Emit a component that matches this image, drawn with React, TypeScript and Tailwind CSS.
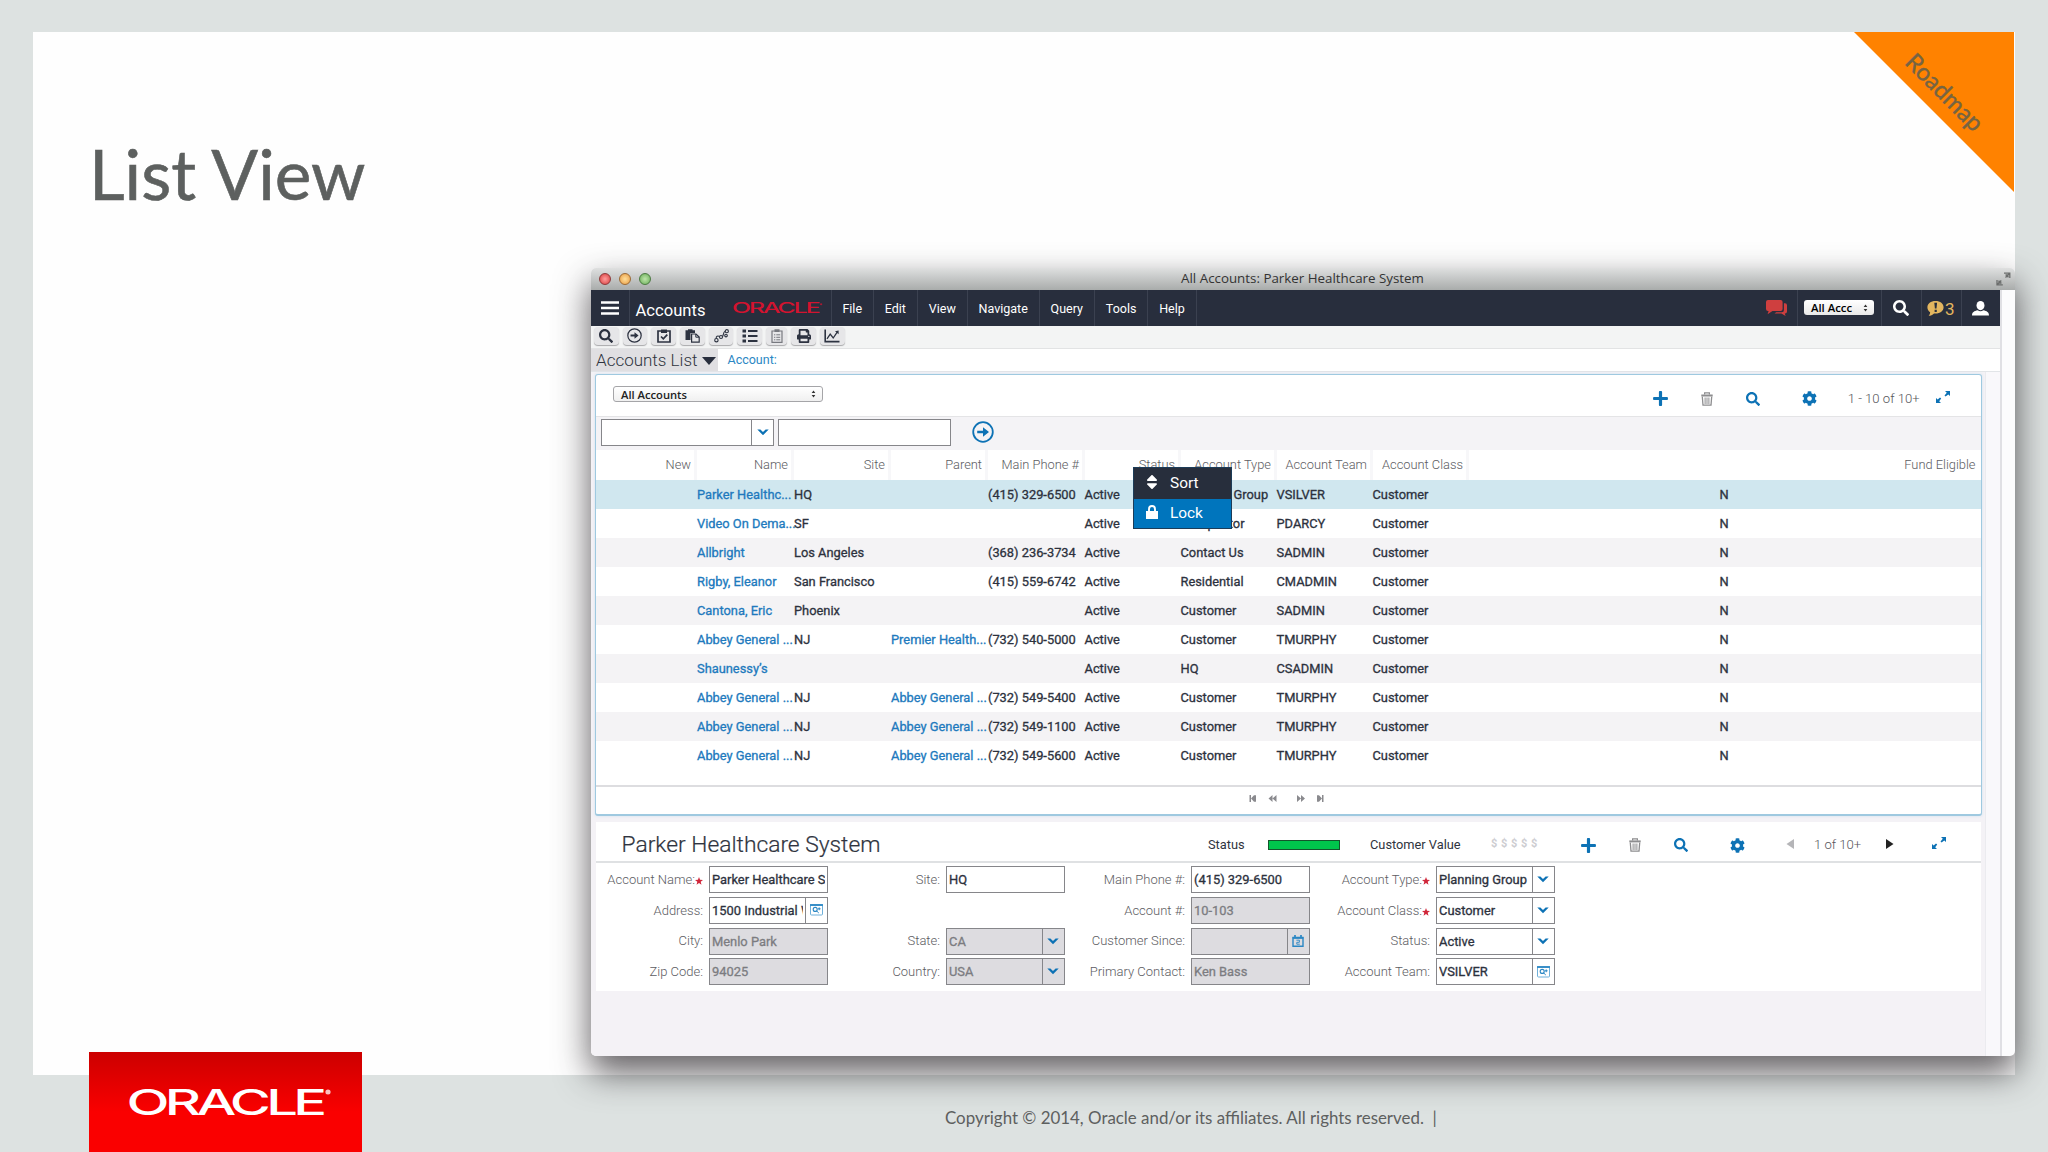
import type { ReactNode } from 'react';
import { FaCog, FaPlus, FaPrint, FaSearch, FaSort } from 'react-icons/fa';

type AccountRow = {
	name: string;
	site?: string;
	parent?: string;
	phone?: string;
	type: string;
	team: string;
};

type Field = {
	label: string;
	value: string;
	required?: boolean;
	disabled?: boolean;
	button?: 'chevron' | 'pick' | 'calendar';
};

const MENU_ITEMS = ['File', 'Edit', 'View', 'Navigate', 'Query', 'Tools', 'Help'];

const GRID_COLS = 'grid grid-cols-[99px_97px_97px_97px_97px_96px_96px_96px_96px_514px]';

const HEADERS = ['New', 'Name', 'Site', 'Parent', 'Main Phone #', 'Status', 'Account Type', 'Account Team', 'Account Class'];

const ROWS: AccountRow[] = [
	{ name: 'Parker Healthc...', site: 'HQ', phone: '(415) 329-6500', type: 'Planning Group', team: 'VSILVER' },
	{ name: 'Video On Dema...', site: 'SF', type: 'Competitor', team: 'PDARCY' },
	{ name: 'Allbright', site: 'Los Angeles', phone: '(368) 236-3734', type: 'Contact Us', team: 'SADMIN' },
	{ name: 'Rigby, Eleanor', site: 'San Francisco', phone: '(415) 559-6742', type: 'Residential', team: 'CMADMIN' },
	{ name: 'Cantona, Eric', site: 'Phoenix', type: 'Customer', team: 'SADMIN' },
	{ name: 'Abbey General ...', site: 'NJ', parent: 'Premier Health...', phone: '(732) 540-5000', type: 'Customer', team: 'TMURPHY' },
	{ name: 'Shaunessy’s', type: 'HQ', team: 'CSADMIN' },
	{ name: 'Abbey General ...', site: 'NJ', parent: 'Abbey General ...', phone: '(732) 549-5400', type: 'Customer', team: 'TMURPHY' },
	{ name: 'Abbey General ...', site: 'NJ', parent: 'Abbey General ...', phone: '(732) 549-1100', type: 'Customer', team: 'TMURPHY' },
	{ name: 'Abbey General ...', site: 'NJ', parent: 'Abbey General ...', phone: '(732) 549-5600', type: 'Customer', team: 'TMURPHY' },
];

// One array per form row, null leaves the slot empty.
const FIELDS: Array<Array<Field | null>> = [
	[
		{ label: 'Account Name:', value: 'Parker Healthcare System', required: true },
		{ label: 'Site:', value: 'HQ' },
		{ label: 'Main Phone #:', value: '(415) 329-6500' },
		{ label: 'Account Type:', value: 'Planning Group', required: true, button: 'chevron' },
	],
	[
		{ label: 'Address:', value: '1500 Industrial Way', button: 'pick' },
		null,
		{ label: 'Account #:', value: '10-103', disabled: true },
		{ label: 'Account Class:', value: 'Customer', required: true, button: 'chevron' },
	],
	[
		{ label: 'City:', value: 'Menlo Park', disabled: true },
		{ label: 'State:', value: 'CA', disabled: true, button: 'chevron' },
		{ label: 'Customer Since:', value: '', disabled: true, button: 'calendar' },
		{ label: 'Status:', value: 'Active', button: 'chevron' },
	],
	[
		{ label: 'Zip Code:', value: '94025', disabled: true },
		{ label: 'Country:', value: 'USA', disabled: true, button: 'chevron' },
		{ label: 'Primary Contact:', value: 'Ken Bass', disabled: true },
		{ label: 'Account Team:', value: 'VSILVER', button: 'pick' },
	],
];

function OracleLogo({ className }: { className: string }) {
	return (
		<svg viewBox="0 0 200 27" preserveAspectRatio="none" className={className} overflow="visible">
			<text
				x="-2.5"
				y="26.5"
				textLength="195"
				lengthAdjust="spacingAndGlyphs"
				fontFamily="Inter, sans-serif"
				fontSize="36.5"
				fontWeight="500"
				letterSpacing="-3"
				fill="currentColor"
			>
				ORACLE
			</text>
			<circle cx="198" cy="3" r="2.6" fill="currentColor" opacity="0.75" />
		</svg>
	);
}

function Chevron() {
	return (
		<svg viewBox="0 0 12 7" className="h-[7px] w-3">
			<path d="M0.3 0.4H3.4L6 2.9L8.6 0.4H11.7L6 6.2Z" fill="#0d72b5" />
		</svg>
	);
}

function PickIcon() {
	return (
		<svg viewBox="0 0 13 12" className="h-3 w-[13px]" fill="none">
			<rect x="0.5" y="1" width="12" height="10" rx="1" stroke="#6fb0da" />
			<path d="M0 1H13" stroke="#2b87c4" strokeWidth="1.8" />
			<circle cx="5.2" cy="5.4" r="2" stroke="#2b87c4" strokeWidth="1.1" />
			<path d="M6.7 7L8.8 9M9.2 3.4V6.2M7.9 4.8H10.6" stroke="#2b87c4" strokeWidth="1" />
		</svg>
	);
}

function CalendarIcon() {
	return (
		<svg viewBox="0 0 12 12" className="size-3" fill="none">
			<path d="M1 3H11V11.2H1Z" stroke="#2b87c4" strokeWidth="1.4" />
			<path d="M0.4 2.6H11.6M3 0V3M9 0V3" stroke="#2b87c4" strokeWidth="1.7" />
			<path d="M4.4 5.2H7.4V7.3H4.8V9.2H7.8" stroke="#2b87c4" strokeWidth="0.9" />
		</svg>
	);
}

function TrashIcon() {
	return (
		<svg viewBox="0 0 12 14" className="h-[14px] w-3" fill="none" stroke="#8d8d8f">
			<path d="M3.6 2.4V0.9H8.4V2.4" strokeWidth="1.2" />
			<path d="M0.3 3.4H11.7" strokeWidth="2" />
			<path d="M1.3 4.6L2 13.2H10L10.7 4.6" strokeWidth="1.3" />
			<path d="M4.1 5.5V12M6 5.5V12M7.9 5.5V12" strokeWidth="1" />
		</svg>
	);
}

function ExpandIcon() {
	return (
		<svg viewBox="0 0 14 12" className="h-3 w-[14px]">
			<path d="M9 0H14V5L12.3 3.4L9.6 5.6L8.5 4.5L10.8 1.7Z" fill="#0d72b5" />
			<path d="M5 12H0V7L1.7 8.6L4 6.5L5.2 7.6L3.2 10.3Z" fill="#0d72b5" />
		</svg>
	);
}

function ArrowCircle({ className }: { className: string }) {
	return (
		<svg viewBox="0 0 22 22" className={className} fill="none" stroke="currentColor">
			<circle cx="11" cy="11" r="9.8" strokeWidth="1.8" />
			<path d="M5.2 9.7H11V6.2L17 11L11 15.8V12.3H5.2Z" fill="currentColor" stroke="none" />
		</svg>
	);
}

function UpDown({ className }: { className: string }) {
	return (
		<svg viewBox="0 0 6 10" className={className}>
			<path d="M3 0.5L5.3 3.7H0.7ZM3 9.5L5.3 6.3H0.7Z" fill="#333" />
		</svg>
	);
}

function ToolButton({ children, narrow }: { children: ReactNode; narrow?: boolean }) {
	return (
		<div
			className={
				'flex h-[18.5px] items-center justify-center rounded-[4px] bg-[#e6e6e8] text-[#2c3240] shadow-[0_1px_1px_#a9a9ab] ' +
				(narrow ? 'w-[21px]' : 'w-[24.5px]')
			}
		>
			{children}
		</div>
	);
}

function AppletIcons() {
	return (
		<>
			<div className="flex w-[46.5px] justify-center">
				<FaPlus className="size-[17px] text-[#0d72b5]" />
			</div>
			<div className="flex w-[46.5px] justify-center">
				<TrashIcon />
			</div>
			<div className="flex w-[46.5px] justify-center">
				<FaSearch className="size-[14px] text-[#0d72b5]" />
			</div>
			<div className="flex w-[65px] justify-center">
				<FaCog className="size-[15px] text-[#0d72b5]" />
			</div>
		</>
	);
}

function FormField({ field }: { field: Field | null }) {
	if (!field) {
		return (
			<>
				<div />
				<div />
			</>
		);
	}
	return (
		<>
			<div className="flex items-center justify-end pr-[6px] text-[13px] font-light text-[#5c5c62]">
				{field.label}
				{field.required ? (
					<svg viewBox="0 0 10 10" className="mt-[3px] size-2">
						<path d="M5 0L6.3 3.5L10 3.7L7.1 6L8.1 9.7L5 7.6L1.9 9.7L2.9 6L0 3.7L3.7 3.5Z" fill="#d0263a" />
					</svg>
				) : null}
			</div>
			<div className={'flex h-[27px] border border-[#86868a] ' + (field.disabled ? 'bg-[#dddce0] text-[#7c7c81]' : 'bg-white text-[#2c313d]')}>
				<div className="min-w-0 flex-1 overflow-hidden px-[2px] text-[12.9px] leading-[25.5px] whitespace-nowrap [-webkit-text-stroke:0.3px]">
					<div className="overflow-hidden">{field.value}</div>
				</div>
				{field.button ? (
					<div className="flex w-[22px] shrink-0 items-center justify-center border-l border-[#86868a]">
						{field.button === 'chevron' ? <Chevron /> : null}
						{field.button === 'pick' ? <PickIcon /> : null}
						{field.button === 'calendar' ? <CalendarIcon /> : null}
					</div>
				) : null}
			</div>
		</>
	);
}

function TitleBar() {
	return (
		<div className="flex h-[22px] items-center rounded-t-[5px] bg-linear-to-b from-[#dfe0e0] to-[#a9acab] pl-2">
			<div className="flex w-[52px] gap-2">
				<div className="size-3 rounded-full border border-[#8f3a3a] bg-radial from-[#ff9d9d] to-[#d5343c]" />
				<div className="size-3 rounded-full border border-[#9c6a35] bg-radial from-[#ffdf9a] to-[#e69a3c]" />
				<div className="size-3 rounded-full border border-[#4c7a42] bg-radial from-[#bfe6ab] to-[#67ad56]" />
			</div>
			<div className="flex-1 pr-[42px] text-center font-['Open_Sans',sans-serif] text-[13.35px] leading-none text-[#333]">
				All Accounts: Parker Healthcare System
			</div>
			<svg viewBox="0 0 15 14" className="mr-1 h-[14px] w-[15px]" fill="none" stroke="#6b6d6c">
				<path d="M8 1.2H13.8V6M13.5 1.5L9.5 5.5M9.5 3H12V5.5" strokeWidth="1.3" />
				<path d="M1 8V12.8H6.8M1.3 12.5L5.3 8.5M3 8.5V11H5.5" strokeWidth="1.3" />
			</svg>
		</div>
	);
}

function NavBar() {
	return (
		<div className="flex h-9 shrink-0 items-stretch bg-[#282e3d] text-[12.5px] text-white">
			<div className="flex w-[39px] items-center border-r border-[#3b4150] pl-[10px]">
				<svg viewBox="0 0 18 14" className="h-[14px] w-[18px]">
					<path d="M0 1.5H18M0 7H18M0 12.5H18" stroke="#fff" strokeWidth="2.6" />
				</svg>
			</div>
			<div className="w-[103px] pl-[5.5px] text-[16.6px] leading-[41px]">Accounts</div>
			<div className="flex w-[97.5px] items-center">
				<OracleLogo className="h-[10.5px] w-[89px] text-[#d3132f]" />
			</div>
			{MENU_ITEMS.map((item) => (
				<div key={item} className="flex items-center border-l border-[#3b4150] px-[10.9px] pt-[2px]">
					{item}
				</div>
			))}
			<div className="flex-1 border-l border-[#3b4150]" />
			<div className="flex w-[31px] items-center">
				<svg viewBox="0 0 21 16" className="h-4 w-[21px]">
					<path d="M2 0H14.6Q16.6 0 16.6 2V9Q16.6 11 14.6 11H6.5L1.6 14.2L2.6 11H2Q0 11 0 9V2Q0 0 2 0Z" fill="#cf3f3f" />
					<path d="M17.9 3.2H19Q21 3.2 21 5.2V11.4Q21 13.4 19 13.4H18.8L19.6 16L15.4 13.4H8.5L10.2 12.2H15.9Q17.9 12.2 17.9 10.2Z" fill="#cf3f3f" />
				</svg>
			</div>
			<div className="flex w-[84px] items-start border-l border-[#3b4150] pt-[10px] pl-[6.5px]">
				<div className="flex h-[15px] w-[70px] items-center justify-between rounded-[3px] bg-linear-to-b from-white to-[#e9e9e9] pr-[6px] pl-[7px] font-['Open_Sans',sans-serif] text-[11.3px] leading-none font-semibold text-black">
					All Accc
					<UpDown className="h-2 w-[5px]" />
				</div>
			</div>
			<div className="flex w-[40px] items-center justify-center border-l border-[#3b4150]">
				<FaSearch className="size-4" />
			</div>
			<div className="flex w-10 items-center border-l border-[#3b4150] pl-[5.5px] text-[#e3b65f]">
				<svg viewBox="0 0 17 15" className="h-[15px] w-[17px]">
					<path d="M8.5 0C13.2 0 16.6 2.7 16.6 6.3S13.2 12.6 8.5 12.6C8 12.6 7.4 12.5 7 12.4C5.5 13.8 3.7 14.7 1.6 14.8C2.7 13.7 3.2 12.4 3.1 11.2C1.3 10.1 0.4 8.4 0.4 6.3C0.4 2.7 3.8 0 8.5 0Z" fill="currentColor" />
					<path d="M7.3 1.8H10.1L9.5 7.6H7.9ZM7.6 8.8H9.8V10.9H7.6Z" fill="#282e3d" />
				</svg>
				<span className="pt-[4px] pl-px text-[17px]">3</span>
			</div>
			<div className="flex w-[39.5px] items-center justify-center border-l border-[#3b4150]">
				<svg viewBox="0 0 17 15" className="h-[15px] w-[17px]" fill="#fff">
					<ellipse cx="8.5" cy="4.6" rx="4" ry="4.6" />
					<path d="M0 14.5C0 11 2.2 10.2 5.6 9.3Q8.5 11 11.4 9.3C14.8 10.2 17 11 17 14.5Z" />
				</svg>
			</div>
		</div>
	);
}

function ToolBar() {
	return (
		<div className="flex h-[23px] shrink-0 items-start gap-[4.2px] border-b border-[#e2e3e4] bg-[#f3f4f4] pt-[0.5px] pl-[3px]">
			<ToolButton>
				<FaSearch className="size-[14px]" />
			</ToolButton>
			<ToolButton>
				<ArrowCircle className="size-[15px]" />
			</ToolButton>
			<ToolButton>
				<svg viewBox="0 0 14 14" className="size-[14px]" fill="none" stroke="currentColor">
					<path d="M1 2H13V13H1Z" strokeWidth="1.7" />
					<path d="M4 2.2H10" strokeWidth="3.4" />
					<path d="M4 7.5L6.3 9.8L10.3 5.6" strokeWidth="1.7" />
				</svg>
			</ToolButton>
			<ToolButton>
				<svg viewBox="0 0 15 14" className="h-[14px] w-[15px]">
					<path d="M0.5 1.2H3V0.2H7.5V1.2H10V4H5.5V11H0.5Z" fill="currentColor" />
					<path d="M6.6 5H11L14.2 8V13.2H6.6Z" fill="#e6e6e8" stroke="currentColor" strokeWidth="1.2" />
					<path d="M10.8 5V8.2H14" stroke="currentColor" strokeWidth="1" fill="none" />
				</svg>
			</ToolButton>
			<ToolButton>
				<svg viewBox="0 0 15 14" className="h-[14px] w-[15px]" fill="none" stroke="currentColor" strokeWidth="1.1">
					<circle cx="2.4" cy="11.2" r="1.7" />
					<circle cx="7" cy="8" r="1.5" />
					<circle cx="12.8" cy="2.2" r="1.6" />
					<circle cx="12" cy="6.6" r="1.3" />
					<path d="M2.2 9.4C2 7.2 3.6 6.4 5.6 7.4M8.4 7.6C9.8 6.4 8.8 3 11.2 2.2" />
				</svg>
			</ToolButton>
			<ToolButton>
				<svg viewBox="0 0 16 14" className="h-[14px] w-4" stroke="currentColor" strokeWidth="2.2">
					<path d="M0.5 2H4M0.5 7H4M0.5 12H4" strokeWidth="3.2" />
					<path d="M6 2H15.5M6 7H15.5M6 12H15.5" />
				</svg>
			</ToolButton>
			<ToolButton narrow>
				<svg viewBox="0 0 12 14" className="h-[14px] w-3" fill="none" stroke="#77797f">
					<path d="M1 2H11V13.3H1Z" strokeWidth="1.2" />
					<path d="M3.5 1.6H8.5" strokeWidth="2.6" />
					<path d="M3 5.8H4.3M5.3 5.8H9.2M3 8.3H4.3M5.3 8.3H9.2M3 10.8H4.3M5.3 10.8H9.2" strokeWidth="1" />
				</svg>
			</ToolButton>
			<ToolButton>
				<FaPrint className="size-[14px]" />
			</ToolButton>
			<ToolButton>
				<svg viewBox="0 0 16 14" className="h-[14px] w-4" fill="none" stroke="currentColor">
					<path d="M1.2 0.5V12.6H15.5" strokeWidth="1.6" />
					<path d="M3 9.8L6.2 5.2L9.2 9L13.2 3.2" strokeWidth="1.3" />
					<path d="M11 2.2L14.6 1.6V5.2Z" fill="currentColor" stroke="none" />
				</svg>
			</ToolButton>
		</div>
	);
}

function ContextMenu() {
	return (
		<div className="absolute top-[91.5px] left-[537px] w-[99px] border border-[#1c3c58] text-[15.4px] text-white">
			<div className="flex h-[31px] items-center bg-[#272e3c] pl-3">
				<FaSort className="mr-3 mb-[2px] h-[18px] w-3" />
				<span className="pt-px">Sort</span>
			</div>
			<div className="flex h-[29px] items-center bg-[#0075bd] pl-3">
				<svg viewBox="0 0 12 14" className="mr-3 mb-[2px] h-[14px] w-3">
					<path d="M0 6H12V14H0Z" fill="#fff" />
					<path d="M3 6.5V4.2Q3 1 6 1T9 4.2V6.5" fill="none" stroke="#fff" strokeWidth="1.9" />
				</svg>
				<span className="pt-px">Lock</span>
			</div>
		</div>
	);
}

function ListApplet() {
	return (
		<div className="relative mt-[2px] ml-1 flex h-[442px] w-[1387px] flex-col rounded-[3px] border border-b-2 border-[#9fc9e0] bg-white shadow-[0_0_3px_#cfe3ef]">
			<div className="flex h-[42px] items-center border-b border-[#e4e4e6] pt-[6px] pl-[17px]">
				<div className="mb-[8.5px] flex h-4 w-[210px] items-center justify-between rounded-[3px] border border-[#a5a5a8] bg-linear-to-b from-white to-[#f0f0f0] pr-[6px] pl-[7px] font-['Open_Sans',sans-serif] text-[11.2px] leading-none font-semibold text-[#222]">
					All Accounts
					<UpDown className="h-2 w-[5px]" />
				</div>
				<div className="flex-1" />
				<AppletIcons />
				<div className="ml-[6px] w-[88px] text-[13.1px] font-light text-[#56565b]">1 - 10 of 10+</div>
				<div className="mr-[31.3px] mb-1">
					<ExpandIcon />
				</div>
			</div>
			<div className="flex h-[33px] items-center bg-[#f4f3f6] pb-[3px] pl-[5px]">
				<div className="flex h-[27px] w-[173px] border border-[#86868a] bg-white">
					<div className="flex-1" />
					<div className="flex w-[22px] items-center justify-center border-l border-[#86868a]">
						<Chevron />
					</div>
				</div>
				<div className="ml-1 h-[27px] w-[173px] border border-[#86868a] bg-white" />
				<ArrowCircle className="ml-[21px] size-[22px] text-[#0d72b5]" />
			</div>
			<div className={GRID_COLS + ' h-[30px] text-[12.85px] font-light text-[#5c5c62]'}>
				{HEADERS.map((h, i) => (
					<div
						key={h}
						className={'flex items-center justify-end pr-[4px] whitespace-nowrap ' + (i > 0 ? '-ml-[1.5px] border-l-[3px] border-[#f7f7f9]' : '')}
					>
						{h}
					</div>
				))}
				<div className="-ml-[1.5px] flex items-center justify-end border-l-[3px] border-[#f7f7f9] pr-[5.5px]">Fund Eligible</div>
			</div>
			{ROWS.map((row, i) => (
				<div
					key={i}
					className={
						GRID_COLS +
						' h-[29px] text-[12.85px] leading-[30.5px] whitespace-nowrap text-[#2c313d] [-webkit-text-stroke:0.3px] ' +
						(i === 0 ? 'bg-[#d0e7ef]' : i % 2 === 0 ? 'bg-[#f4f3f5]' : 'bg-white')
					}
				>
					<div />
					<div className="pl-[2px] text-[#2079bd]">{row.name}</div>
					<div className="pl-[2px]">{row.site}</div>
					<div className="pl-[2px] text-[#2079bd]">{row.parent}</div>
					<div className="pl-[2px]">{row.phone}</div>
					<div className="pl-[1.5px]">Active</div>
					<div className="pl-[1.5px]">{row.type}</div>
					<div className="pl-[1.5px]">{row.team}</div>
					<div className="pl-[1.5px]">Customer</div>
					<div className="text-center">N</div>
				</div>
			))}
			<div className="mt-[15px] flex flex-1 justify-center border-t-2 border-[#dddde0] pt-[8px] pr-[4px] text-[#8a8a8e]">
				<svg viewBox="0 0 76 7" className="h-[7px] w-[76px]" fill="currentColor">
					<path d="M0.5 0H2V7H0.5ZM2 3.5L5 0.3V6.7ZM5 0.3H7V6.7H5Z" />
					<path d="M19.5 3.5L23.5 0V7ZM23.5 3.5L27.5 0V7Z" />
					<path d="M48 0L52 3.5L48 7ZM52 0L56 3.5L52 7Z" />
					<path d="M68 0.3H70V6.7H68ZM70 0.3L73 3.5L70 6.7ZM73 0H74.5V7H73Z" />
				</svg>
			</div>
			<ContextMenu />
		</div>
	);
}

function FormApplet() {
	return (
		<div className="mt-[6px] ml-[5px] h-[169px] w-[1385px] bg-white text-[#2f3440]">
			<div className="flex h-[41px] items-center border-b-2 border-[#dfe1e3] pt-[7px]">
				<div className="w-[612px] pt-px pl-[25.5px] text-[22.8px] leading-none font-light [-webkit-text-stroke:0.2px]">
					Parker Healthcare System
				</div>
				<div className="w-[60px] text-[12.8px]">Status</div>
				<div className="mb-px h-[10px] w-[72px] border border-[#14552c] bg-[#00c64c]" />
				<div className="ml-[30px] w-[121px] text-[12.8px]">Customer Value</div>
				<div className="mb-px flex-1 text-[11px] font-bold tracking-[3.7px] text-[#cdcdd1]">$$$$$</div>
				<AppletIcons />
				<svg viewBox="0 0 8 10" className="mb-[3px] ml-4 h-[10px] w-2">
					<path d="M8 0V10L0.5 5Z" fill="#b5b5b8" />
				</svg>
				<div className="mb-px ml-[20.5px] w-[71.5px] text-[13.1px] font-light text-[#56565b]">1 of 10+</div>
				<svg viewBox="0 0 8 10" className="mb-[3px] h-[10px] w-2">
					<path d="M0 0V10L7.5 5Z" fill="#222" />
				</svg>
				<div className="mr-[35.5px] mb-1 ml-[38px]">
					<ExpandIcon />
				</div>
			</div>
			<div className="grid grid-cols-[113px_118.5px_118.5px_118.5px_126.5px_118.5px_126.5px_118.5px] gap-y-[3.8px] pt-[3px]">
				{FIELDS.flat().map((field, i) => (
					<FormField key={i} field={field} />
				))}
			</div>
		</div>
	);
}

function AppWindow() {
	return (
		<div className="ml-[558px] h-[788px] w-[1424px] rounded-[5px] bg-[#fcfcfd] font-['Roboto',sans-serif] shadow-[0_16px_34px_1px_rgba(40,36,40,0.72)]">
			<TitleBar />
			<div className="flex h-[766px] w-[1411px] flex-col overflow-hidden rounded-bl-[5px] border-r-2 border-[#e0e0e4] bg-[#f4f2f6]">
				<NavBar />
				<ToolBar />
				<div className="flex h-[23px] shrink-0 items-stretch border-b border-[#e2e5e8] bg-white">
					<div className="flex w-[127px] items-center bg-[#e0dfe2] pt-px pl-[5px] text-[17px] font-light text-[#2f3440]">
						Accounts List
						<svg viewBox="0 0 14 8" className="ml-[5px] h-2 w-[14px]">
							<path d="M0 0H14L7 8Z" fill="#282e3d" />
						</svg>
					</div>
					<div className="flex items-center pt-px pl-[9.5px] text-[12.5px] text-[#2b87c4]">Account:</div>
				</div>
				<div className="flex min-h-0 flex-1">
					<div className="w-[1394px] shrink-0">
						<ListApplet />
						<FormApplet />
					</div>
					<div className="flex-1 border-l border-[#ebebef] bg-[#f9f8fb]" />
				</div>
			</div>
		</div>
	);
}

export default function App() {
	return (
		<div className="h-[1152px] w-[2048px] overflow-hidden bg-[#dde2e1] pt-8 font-['Lato',sans-serif] text-[#5d605f]">
			<div className="relative ml-[33px] h-[1043px] w-[1982px] bg-[#fefefe]">
				<h1 className="h-[236px] pt-[101.5px] pl-[56px] text-[69.3px] leading-[80px] [-webkit-text-stroke:0.6px]">List View</h1>
				<AppWindow />
				<div className="absolute top-0 right-[1px] size-40 bg-[#ff8200] [clip-path:polygon(0_0,100%_0,100%_100%)]">
					<div className="absolute top-[44px] left-[31px] w-[120px] rotate-45 text-center text-[24px] leading-8 text-[#756444] [-webkit-text-stroke:0.4px]">
						Roadmap
					</div>
				</div>
			</div>
			<div className="relative -mt-[23px] flex h-[100px] pl-[89px]">
				<div className="h-[100px] w-[273px] bg-linear-to-b from-[#cc0000] to-[#fa0000] to-60% pt-[37px] pl-10">
					<OracleLogo className="h-[26px] w-[201px] text-white" />
				</div>
				<div className="pt-[54px] pl-[583px] text-[16.9px] leading-6 whitespace-pre">
					Copyright © 2014, Oracle and/or its affiliates. All rights reserved.  |
				</div>
			</div>
		</div>
	);
}
